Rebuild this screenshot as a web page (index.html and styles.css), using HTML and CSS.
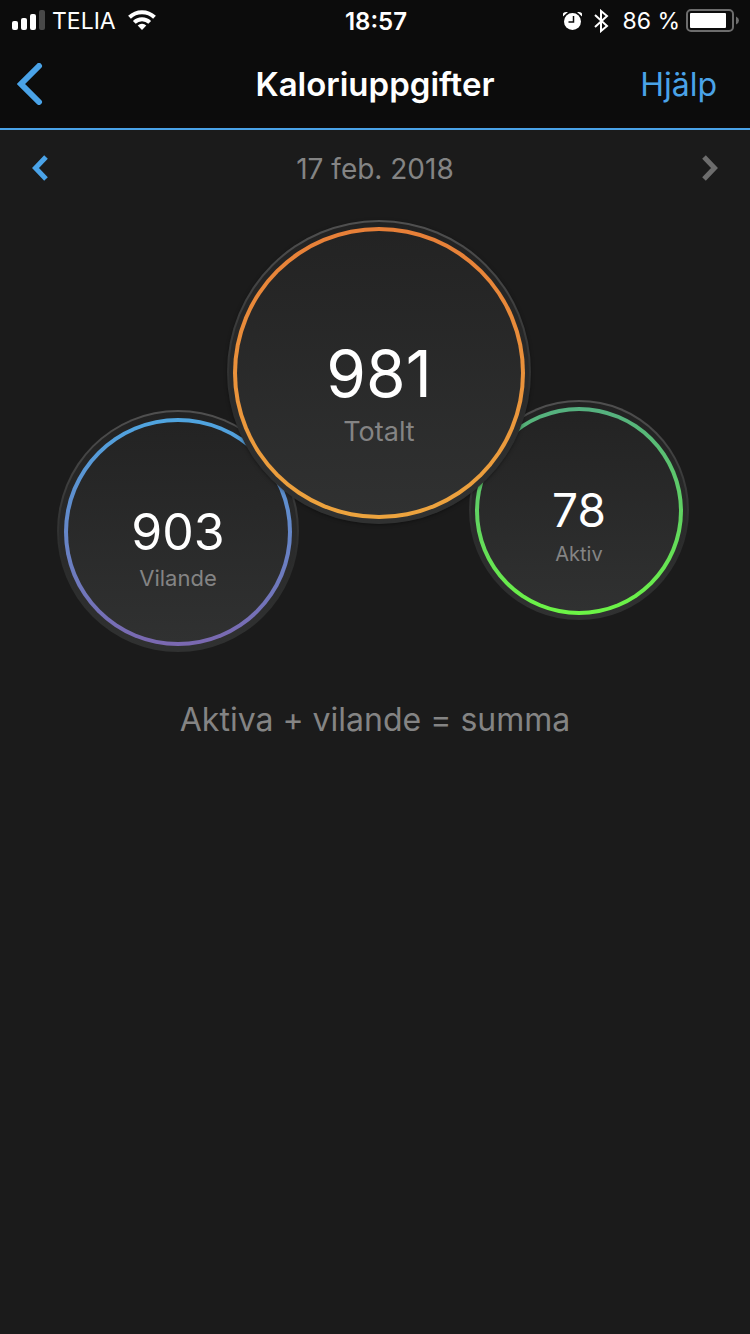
FILE: index.html
```
<!DOCTYPE html>
<html lang="sv">

    <head>
        <meta charset="UTF-8">
        <meta name="viewport" content="width=device-width, initial-scale=1.0">
        <title>Kaloriuppgifter</title>
        <link rel="stylesheet" href="styles.css">
    </head>

    <body>
        <header class="top">
            <div class="status-bar">
                <div class="status-left">
                    <svg class="signal" width="34" height="22" viewBox="0 0 34 22" fill="#fff">
                        <rect x="0" y="11" width="6" height="9" rx="2" />
                        <rect x="9" y="8" width="6" height="12" rx="2" />
                        <rect x="18" y="4" width="6" height="16" rx="2" />
                        <rect x="27" y="0" width="6" height="20" rx="2" fill="#484848" />
                    </svg>
                    <span>TELIA</span>
                    <svg class="wifi" width="28" height="22" viewBox="0 0 28 22" fill="none" stroke="#fff" stroke-width="4">
                        <path d="M1.500 7.200a18 18 0 0 1 25 0" />
                        <path d="M6.300 12.400a11 11 0 0 1 15.400 0" />
                        <path d="M14 20l-4.300-4.400a6 6 0 0 1 8.600 0z" fill="#fff" stroke="none" />
                    </svg>
                </div>
                <span class="clock">18:57</span>
                <div class="status-right">
                    <svg width="20" height="20" viewBox="0 0 20 20">
                        <path d="M0 5.500V2.500Q.5 1 3 1H5zM19 5.500V2.500Q18.500 1 16 1H14z" fill="#fff" />
                        <circle cx="9.500" cy="10.500" r="9.200" fill="#0c0c0c" />
                        <circle cx="9.500" cy="10.500" r="8.500" fill="#fff" />
                        <path d="M10.500 5v6h-5" fill="none" stroke="#0c0c0c" stroke-width="1.500" />
                    </svg>
                    <svg class="bluetooth" width="15" height="24" viewBox="0 0 15 24" fill="none" stroke="#fff" stroke-width="2">
                        <path d="M1 6l12 11-6 5V2l6 5L1 18" />
                    </svg>
                    <span>86 %</span>
                    <svg class="battery" width="54" height="24" viewBox="0 0 54 24">
                        <rect x="1" y="1" width="46" height="21" rx="4" fill="none" stroke="#6d6d6d" stroke-width="2" />
                        <rect x="4" y="4" width="36" height="15" rx="1" fill="#fff" />
                        <path d="M50 7.500q3 1.500 3 4t-3 4z" fill="#6d6d6d" />
                    </svg>
                </div>
            </div>
            <nav class="nav-bar">
                <button class="back" type="button" aria-label="Tillbaka">
                    <svg width="26" height="42" viewBox="0 0 26 42" fill="none" stroke="#4aa3e8" stroke-width="6" stroke-linecap="round">
                        <path d="M22 3L4 21l18 18" />
                    </svg>
                </button>
                <h1>Kaloriuppgifter</h1>
                <a class="help" href="#">Hjälp</a>
            </nav>
        </header>

        <main>
            <div class="date-row">
                <button type="button" aria-label="Föregående dag">
                    <svg width="16" height="28" viewBox="0 0 16 28" fill="none" stroke="#4aa3e8" stroke-width="5">
                        <path d="M14 2L3.500 13 14 24" />
                    </svg>
                </button>
                <span>17 feb. 2018</span>
                <button type="button" aria-label="Nästa dag">
                    <svg width="16" height="28" viewBox="0 0 16 28" fill="none" stroke="#6d6d6d" stroke-width="5">
                        <path d="M2 2l10.500 11L2 24" />
                    </svg>
                </button>
            </div>

            <div class="bubbles">
                <section class="bubble resting">
                    <div class="ring">
                        <strong>903</strong>
                        <span>Vilande</span>
                    </div>
                </section>
                <section class="bubble total">
                    <div class="ring">
                        <strong>981</strong>
                        <span>Totalt</span>
                    </div>
                </section>
                <section class="bubble active">
                    <div class="ring">
                        <strong>78</strong>
                        <span>Aktiv</span>
                    </div>
                </section>
            </div>

            <p class="formula">Aktiva + vilande = summa</p>
        </main>
    </body>

</html>
```

FILE: styles.css
```
*{
    margin:0;
    padding:0;
    box-sizing:border-box;
}
body{
    min-height:100vh;
    background-color:#1b1b1b;
    color:white;
    font-family:Inter, "Liberation Sans", sans-serif;
}
svg{
    display:block;
}
button{
    border:none;
    background:none;
    cursor:pointer;
}

/* top bar */
.top{
    background-color:#0c0c0c;
    border-bottom:2px solid #4aa3e8;
}
.status-bar{
    display:grid;
    grid-template-columns:1fr auto 1fr;
    align-items:center;
    height:40px;
    padding:2px 10px 0 12px;
    font-size:23px;
}
.status-left,
.status-right{
    display:flex;
    align-items:center;
}
.status-right{
    justify-content:flex-end;
}
.signal{
    margin-right:6px;
}
.wifi{
    margin-left:12px;
}
.clock{
    font-size:24px;
    font-weight:600;
}
.bluetooth{
    margin:0 13px 0 11px;
}
.battery{
    margin-left:6px;
}
.nav-bar{
    display:grid;
    grid-template-columns:1fr auto 1fr;
    align-items:center;
    height:88px;
    padding:0 17px;
}
.back{
    justify-self:start;
}
h1{
    font-size:33px;
    font-weight:600;
}
.help{
    justify-self:end;
    padding-right:16px;
    color:#4aa3e8;
    font-size:32px;
    text-decoration:none;
}

/* date picker */
.date-row{
    display:flex;
    justify-content:space-between;
    align-items:center;
    height:78px;
    padding:0 32px;
    color:#848484;
    font-size:28px;
}

/* calorie circles */
.bubbles{
    display:flex;
    justify-content:center;
    align-items:flex-start;
    padding:12px 4px 0 0;
}
.bubble{
    flex:none;
    padding:5px 4px 3px;
    border:2px solid transparent;
    border-radius:50%;
    background:
        linear-gradient(#222, #303131) padding-box,
        linear-gradient(#505050, #2b2c2c 60%, #303131) border-box;
}
.ring{
    display:flex;
    flex-direction:column;
    align-items:center;
    height:100%;
    border:4px solid transparent;
    border-radius:50%;
}
.bubble strong{
    font-weight:400;
}
.bubble span{
    color:#848484;
}
.resting{
    width:242px;
    height:242px;
    margin-top:190px;
    padding:6px 5px 4px;
}
.resting .ring{
    padding-top:78px;
    background:
        linear-gradient(#232323, #303131) padding-box,
        linear-gradient(#4fa5e0, #7b68b0) border-box;
}
.resting strong{
    font-size:50px;
    line-height:64px;
}
.resting span{
    font-size:22px;
    line-height:28px;
}
.total{
    position:relative;
    width:304px;
    height:304px;
    margin:0 -62px 0 -72px;
    box-shadow:0 1px 4px -1px rgba(0, 0, 0, 0.6);
}
.total .ring{
    padding-top:103px;
    background:
        linear-gradient(#232323, #303131) padding-box,
        linear-gradient(#e77f38, #eda43e) border-box;
}
.total strong{
    font-size:64px;
    line-height:80px;
}
.total span{
    font-size:27px;
    line-height:36px;
}
.active{
    width:220px;
    height:220px;
    margin-top:180px;
}
.active .ring{
    padding-top:69px;
    background:
        linear-gradient(#232323, #303131) padding-box,
        linear-gradient(#55b080, #6cf545) border-box;
}
.active strong{
    font-size:46px;
    line-height:60px;
}
.active span{
    font-size:20px;
    line-height:28px;
}

.formula{
    margin-top:47px;
    color:#848484;
    font-size:32px;
    line-height:42px;
    text-align:center;
}
```
